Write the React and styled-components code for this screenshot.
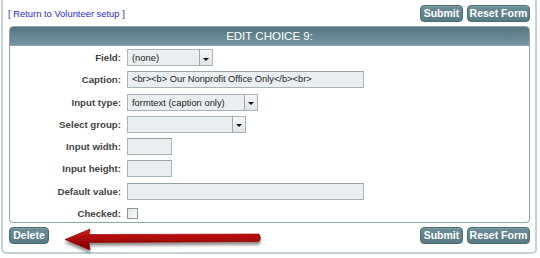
import React from "react";
import styled, { createGlobalStyle } from "styled-components";

const Global = createGlobalStyle`
  html, body { margin: 0; padding: 0; background: #ffffff; }
  body { font-family: "Liberation Sans", Arial, sans-serif; }
`;

const Frame = styled.div`
  position: relative;
  box-sizing: border-box;
  margin-left: 1px;
  width: 536px;
  height: 254px;
  border: 2px solid #c3d1d8;
  border-top: none;
  border-radius: 0 0 5px 5px;
  padding: 5px 5px 0 6px;
  display: flex;
  flex-direction: column;
`;

const Bar = styled.div`
  display: flex;
  align-items: center;
  justify-content: space-between;
  height: 17px;
  margin-top: ${(p) => p.$mt || 0}px;
`;

const BackLink = styled.div`
  font-family: "Liberation Sans", Arial, sans-serif;
  font-size: 9.4px;
  color: #2a2ad0;
  margin-left: -1px;
  white-space: nowrap;
`;

const LinkText = styled.a`
  color: #2a2ad0;
  text-decoration: none;
`;

const ButtonGroup = styled.div`
  display: flex;
  gap: 4px;
`;

const Button = styled.button`
  box-sizing: border-box;
  height: 17px;
  width: ${(p) => p.$w}px;
  padding: 0;
  border: 1px solid #4a6c75;
  border-radius: 4px;
  background: linear-gradient(#6b8d96, #587a83);
  color: #ffffff;
  font-family: "Liberation Sans", Arial, sans-serif;
  font-weight: bold;
  font-size: 10.5px;
  line-height: 15px;
  text-align: center;
  box-shadow: inset 0 1px 0 rgba(255, 255, 255, 0.15);
`;

const Panel = styled.div`
  box-sizing: border-box;
  margin-top: 4px;
  height: 197px;
  border: 1px solid #8ea5ad;
  border-radius: 4px;
  overflow: hidden;
  background: #ffffff;
`;

const Header = styled.div`
  height: 18px;
  background: linear-gradient(#54767f, #7595a0);
  color: #ffffff;
  font-size: 11.5px;
  line-height: 19px;
  text-align: center;
  border-bottom: 1px solid #8ca3ab;
`;

const Form = styled.div`
  display: grid;
  grid-template-columns: 111px 1fr;
  column-gap: 6px;
  row-gap: 5.3px;
  padding: 3px 0 0 0;
`;

const Label = styled.div`
  height: 17px;
  display: flex;
  align-items: center;
  justify-content: flex-end;
  font-size: 9.7px;
  font-weight: bold;
  color: #444444;
`;

const Field = styled.div`
  height: 17px;
  display: flex;
  align-items: center;
`;

const TextBox = styled.div`
  box-sizing: border-box;
  width: ${(p) => p.$w}px;
  height: 17px;
  border: 1px solid #aab3b7;
  border-top-color: #9aa3a7;
  background: #e9eff1;
  font-size: 9.3px;
  color: #222;
  padding-left: 4px;
  line-height: 15px;
  white-space: nowrap;
  overflow: hidden;
`;

const SelectBox = styled.div`
  box-sizing: border-box;
  position: relative;
  width: ${(p) => p.$w}px;
  height: 17px;
  border: 1px solid #aab3b7;
  background: #e9eff1;
  font-size: 9.4px;
  color: #222;
  padding-left: 4px;
  line-height: 15px;
  white-space: nowrap;
`;

const DropBtn = styled.span`
  position: absolute;
  right: 0;
  top: 0;
  box-sizing: border-box;
  width: 13px;
  height: 15px;
  border-left: 1px solid #9ea8ac;
  background: linear-gradient(#f4f6f7, #dfe4e6);
  display: flex;
  align-items: center;
  justify-content: center;
  &::after {
    content: "";
    width: 0;
    height: 0;
    margin-top: 3px;
    border-left: 3px solid transparent;
    border-right: 3px solid transparent;
    border-top: 3px solid #111;
  }
`;

const CheckBox = styled.span`
  box-sizing: border-box;
  width: 11px;
  height: 11px;
  border: 1px solid #8d9598;
  background: linear-gradient(135deg, #e2e6e8, #fafafa);
  margin-top: -1px;
`;

const Arrow = styled.svg`
  position: absolute;
  left: 55px;
  top: 224px;
  overflow: visible;
`;

function Select({ w, children }) {
  return (
    <SelectBox $w={w}>
      {children}
      <DropBtn />
    </SelectBox>
  );
}

export default function App() {
  return (
    <>
      <Global />
      <Frame>
        <Bar>
          <BackLink>
            [ <LinkText href="#">Return to Volunteer setup</LinkText> ]
          </BackLink>
          <ButtonGroup>
            <Button $w={43}>Submit</Button>
            <Button $w={63}>Reset Form</Button>
          </ButtonGroup>
        </Bar>
        <Panel>
          <Header>EDIT CHOICE 9:</Header>
          <Form>
            <Label>Field:</Label>
            <Field><Select w={86}>(none)</Select></Field>
            <Label>Caption:</Label>
            <Field><TextBox $w={237}>&lt;br&gt;&lt;b&gt; Our Nonprofit Office Only&lt;/b&gt;&lt;br&gt;</TextBox></Field>
            <Label>Input type:</Label>
            <Field><Select w={131}>formtext (caption only)</Select></Field>
            <Label>Select group:</Label>
            <Field><Select w={119}></Select></Field>
            <Label>Input width:</Label>
            <Field><TextBox $w={45} /></Field>
            <Label>Input height:</Label>
            <Field><TextBox $w={45} /></Field>
            <Label>Default value:</Label>
            <Field><TextBox $w={237} /></Field>
            <Label>Checked:</Label>
            <Field><CheckBox /></Field>
          </Form>
        </Panel>
        <Bar $mt={4}>
          <Button $w={40}>Delete</Button>
          <ButtonGroup>
            <Button $w={43}>Submit</Button>
            <Button $w={63}>Reset Form</Button>
          </ButtonGroup>
        </Bar>
        <Arrow width="210" height="32" viewBox="0 0 210 32">
          <defs>
            <linearGradient id="ag" x1="0" y1="0" x2="0" y2="1">
              <stop offset="0" stopColor="#d42020" />
              <stop offset="0.5" stopColor="#a80808" />
              <stop offset="1" stopColor="#7a0000" />
            </linearGradient>
            <filter id="sh" x="-10%" y="-50%" width="120%" height="200%">
              <feGaussianBlur in="SourceAlpha" stdDeviation="1.6" />
              <feOffset dx="0" dy="2.5" result="b" />
              <feComponentTransfer><feFuncA type="linear" slope="0.45" /></feComponentTransfer>
              <feMerge><feMergeNode /><feMergeNode in="SourceGraphic" /></feMerge>
            </filter>
          </defs>
          <path
            d="M7 15.5 L32 5 L31 10.5 L201 10 Q204 14 201 17.5 L31 18.5 L32 26 Z"
            fill="url(#ag)"
            stroke="#8a0000"
            strokeWidth="0.6"
            strokeLinejoin="round"
            filter="url(#sh)"
          />
        </Arrow>
      </Frame>
    </>
  );
}
